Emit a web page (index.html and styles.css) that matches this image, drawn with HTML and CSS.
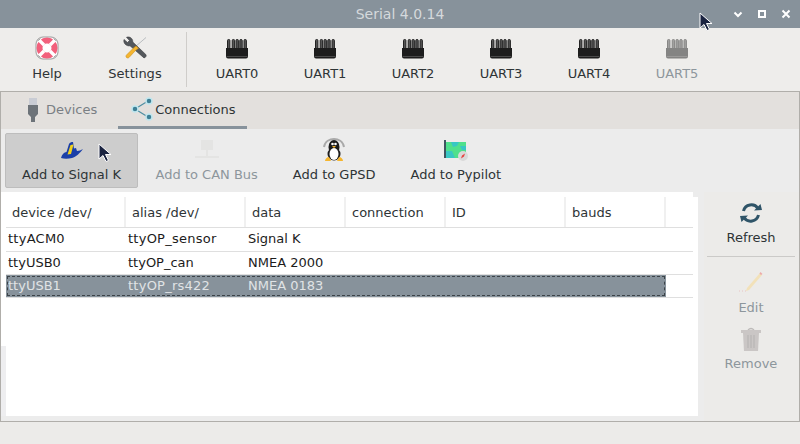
FILE: index.html
```html
<!DOCTYPE html>
<html lang="en">
<head>
<meta charset="utf-8">
<title>Serial 4.0.14</title>
<link rel="stylesheet" href="styles.css">
</head>
<body>
<svg class="defs" width="0" height="0" aria-hidden="true">
  <symbol id="uart" viewBox="0 0 24 24">
    <g fill="#555" stroke="#222" stroke-width="1">
      <rect x="2.5" y="3.5" width="2.4" height="11" rx="1"/>
      <rect x="7.2" y="3.5" width="2.4" height="11" rx="1"/>
      <rect x="11" y="3.5" width="2.4" height="11" rx="1"/>
      <rect x="14.8" y="3.5" width="2.4" height="11" rx="1"/>
      <rect x="19" y="3.5" width="2.4" height="11" rx="1"/>
    </g>
    <path d="M1 12h22v8.500q0 2-2 2H3q-2 0-2-2z" fill="#1d1d1d"/>
    <path d="M1.500 20.500h21" stroke="#4a4a4a"/>
  </symbol>
</svg>

<header class="titlebar">
  <span class="title">Serial 4.0.14</span>
  <div class="winbtns">
    <svg width="10" height="10" viewBox="0 0 10 10"><path d="M1.500 3.500L5 7l3.500-3.500" fill="none" stroke="#fff" stroke-width="2"/></svg>
    <svg width="10" height="10" viewBox="0 0 10 10"><rect x="2" y="2" width="6" height="6" fill="none" stroke="#fff" stroke-width="2"/></svg>
    <svg width="10" height="10" viewBox="0 0 10 10"><path d="M1.500 1.500l7 7M8.500 1.500l-7 7" fill="none" stroke="#fff" stroke-width="2"/></svg>
  </div>
</header>

<nav class="toolbar">
  <div class="tool">
    <svg class="ico" viewBox="0 0 24 24">
      <rect x="1" y="1" width="22" height="22" rx="7" fill="#fff" stroke="#9a9a9a"/>
      <circle cx="12" cy="12" r="7.500" fill="none" stroke="#f2607c" stroke-width="6"/>
      <path d="M4 4l5 5M20 4l-5 5M4 20l5-5M20 20l-5-5" stroke="#fff" stroke-width="3.200"/>
      <path d="M2.500 5l3-2.500M18.500 2.500l3 2.500M2.500 19l3 2.500M18.500 21.500l3-2.500" stroke="#9a9a9a" stroke-width="1"/>
    </svg>
    <span>Help</span>
  </div>
  <div class="tool">
    <svg class="ico" viewBox="0 0 24 24">
      <path d="M23 1.500L12 11" stroke="#b9bdc0" stroke-width="1"/>
      <path d="M1 3.500l3.500 3 2-2-3-3.200c3-1.200 6.500 1 6.300 4.700l13 12.500c1 1.300 0 3-1.800 3.400L7 9.800C3.300 10.500 0 7 1 3.500z" fill="#54585c" stroke="#3a3d40" stroke-width=".6"/>
      <path d="M13 10l-3 2.500-6.500 6.500c-1.500 1.700.5 4 2.500 2.500l6.500-7 3-2.300z" fill="#f5b52e" stroke="#c98f1c" stroke-width=".6"/>
    </svg>
    <span>Settings</span>
  </div>
  <div class="vsep"></div>
  <div class="tool"><svg class="ico"><use href="#uart"/></svg><span>UART0</span></div>
  <div class="tool"><svg class="ico"><use href="#uart"/></svg><span>UART1</span></div>
  <div class="tool"><svg class="ico"><use href="#uart"/></svg><span>UART2</span></div>
  <div class="tool"><svg class="ico"><use href="#uart"/></svg><span>UART3</span></div>
  <div class="tool"><svg class="ico"><use href="#uart"/></svg><span>UART4</span></div>
  <div class="tool off"><svg class="ico"><use href="#uart"/></svg><span>UART5</span></div>
</nav>

<main class="frame">
  <div class="tabs">
    <div class="tab">
      <svg class="tabico" viewBox="0 0 24 24">
        <path d="M8 0h8v7H8z" fill="#c9ccd4"/>
        <path d="M7 7h10v9l-3 3v5h-4v-5l-3-3z" fill="#6d7379"/>
      </svg>
      <span>Devices</span>
    </div>
    <div class="tab active">
      <svg class="tabico" viewBox="0 0 24 24">
        <path d="M18 4L5 12l13 8" fill="none" stroke="#4f8fa3" stroke-width="1.200"/>
        <g fill="#3f8096" stroke="#bfe6ee" stroke-width="1.500">
          <circle cx="19" cy="4" r="3"/><circle cx="5" cy="12" r="3"/><circle cx="19" cy="20" r="3"/>
        </g>
      </svg>
      <span>Connections</span>
    </div>
  </div>

  <div class="actions">
    <div class="action hover">
      <svg class="ico" viewBox="0 0 24 24">
        <path d="M1 20c3 1 7 1 11 0s8-5 11-9c-2 1-4 2-6 2l-1-3-2 .5-1-6.500c-2 0-3 .5-4 2l-2.500 8C4 14.500 2 16 1 20z" fill="#1a3fa8"/>
        <path d="M10.500 7l3-.5-2.500 9.500-3.500.5z" fill="#f2d21c"/>
      </svg>
      <span>Add to Signal K</span>
    </div>
    <div class="action off">
      <svg class="ico" viewBox="0 0 24 24">
        <path d="M6 2h12v10H6zM11 12h2v6h-2zM0 18h24v2H0z" fill="#dededc"/>
      </svg>
      <span>Add to CAN Bus</span>
    </div>
    <div class="action">
      <svg class="ico" viewBox="0 0 24 24">
        <path d="M2 9C3 3 8 1 12 1s9 2 10 8" fill="none" stroke="#a9a9a9" stroke-width="2"/>
        <ellipse cx="12" cy="9" rx="5.500" ry="7" fill="#1b1b1b"/>
        <ellipse cx="12" cy="16" rx="6.500" ry="6.500" fill="#1b1b1b"/>
        <ellipse cx="12" cy="16" rx="4.500" ry="6" fill="#fff"/>
        <circle cx="10.500" cy="6" r="1.300" fill="#fff"/><circle cx="13.500" cy="6" r="1.300" fill="#fff"/>
        <path d="M10 8h4l-2 2z" fill="#f5b52e"/>
        <path d="M3 23c0-2 2-4 4-4l2 4zM21 23c0-2-2-4-4-4l-2 4z" fill="#f5b52e"/>
      </svg>
      <span>Add to GPSD</span>
    </div>
    <div class="action">
      <svg class="ico" viewBox="0 0 24 24">
        <path d="M0 2h2v18H0z" fill="#3e5560"/>
        <path d="M2 4h20v16H2z" fill="#4fe08c"/>
        <path d="M7 4h8l-2 4-4 1zM16 8h6v4h-4zM2 13h6l3 7H2z" fill="#38c7c4"/>
        <circle cx="19" cy="18" r="5" fill="#d9d9d9"/>
        <path d="M21 15.500l-3 2-1 3 3-2z" fill="#e8433f"/>
      </svg>
      <span>Add to Pypilot</span>
    </div>
  </div>

  <div class="content">
    <section class="tablewrap">
      <div class="tabletop"></div>
      <div class="tablebody">
        <div class="gutter"></div>
        <div class="grid">
          <div class="row head">
            <div class="cell c120">device /dev/</div>
            <div class="cell c120">alias /dev/</div>
            <div class="cell c100">data</div>
            <div class="cell c100">connection</div>
            <div class="cell c120">ID</div>
            <div class="cell c100">bauds</div>
          </div>
          <div class="row">
            <div class="cell c120 wide">ttyACM0</div>
            <div class="cell c120 wide">ttyOP_sensor</div>
            <div class="cell c100">Signal K</div>
          </div>
          <div class="row">
            <div class="cell c120">ttyUSB0</div>
            <div class="cell c120">ttyOP_can</div>
            <div class="cell c100">NMEA 2000</div>
          </div>
          <div class="row selected">
            <div class="selbox">
              <div class="cell c120">ttyUSB1</div>
              <div class="cell c120 wide">ttyOP_rs422</div>
              <div class="cell c100">NMEA 0183</div>
            </div>
          </div>
        </div>
      </div>
    </section>
    <aside class="side">
      <div class="sidebtn first">
        <svg class="ico" viewBox="0 0 24 24">
          <path d="M4.500 10A8 8 0 0 1 19 7.500M19.500 14A8 8 0 0 1 5 16.500" fill="none" stroke="#2f5468" stroke-width="3"/>
          <path d="M23 9l-8 .5L21.500 3zM1 15l8-.5L2.500 21z" fill="#2f5468"/>
        </svg>
        <span>Refresh</span>
      </div>
      <div class="hsep"></div>
      <div class="sidebtn off">
        <svg class="ico" viewBox="0 0 24 24">
          <path d="M8 18l13-15 2 2-13 15-3 1z" fill="#f9d98a"/>
          <path d="M20.500 3.500l1-1.500 2 2-1.500 1z" fill="#ee6a6a"/>
          <path d="M0 21h8" stroke="#e8a0a0" stroke-width="1" stroke-dasharray="1 2"/>
        </svg>
        <span>Edit</span>
      </div>
      <div class="sidebtn off tight">
        <svg class="ico" viewBox="0 0 24 24">
          <path d="M9 3q3-3 6 0" fill="none" stroke="#8f8a8a" stroke-width="1.200"/>
          <path d="M2 3h20v3H2z" fill="#a9a3a3"/>
          <path d="M4 6h16l-1 18H5z" fill="#a9a3a3"/>
          <path d="M9 8v13M12 8v13M15 8v13" stroke="#7f7a7a" stroke-width="1"/>
        </svg>
        <span>Remove</span>
      </div>
    </aside>
  </div>
</main>

<svg class="cursor top" width="14" height="20" viewBox="0 0 14 20"><path d="M1 1v15l4-3.500 3 6 2.500-1-3-6h5.500z" fill="#1a2340" stroke="#fff" stroke-width="1"/></svg>
<svg class="cursor inner" width="14" height="20" viewBox="0 0 14 20"><path d="M1 1v15l4-3.500 3 6 2.500-1-3-6h5.500z" fill="#1a2340" stroke="#fff" stroke-width="1"/></svg>
</body>
</html>
```
FILE: styles.css
```css
* { box-sizing: border-box; }
html, body { margin: 0; height: 100%; }
body {
  width: 800px;
  height: 444px;
  overflow: hidden;
  background: #ecebe9;
  font-family: "DejaVu Sans", sans-serif;
  font-size: 13px;
  color: #2e3436;
  position: relative;
  display: flex;
  flex-direction: column;
}
.defs { position: absolute; }

.titlebar {
  height: 28px;
  flex: none;
  background: #87929b;
  display: flex;
  align-items: center;
  justify-content: center;
  position: relative;
}
.title { color: #d5d9dc; font-size: 14px; }
.winbtns {
  position: absolute;
  right: 9px;
  top: 9px;
  display: flex;
  gap: 14px;
}
.winbtns svg { display: block; }

.toolbar {
  height: 63px;
  flex: none;
  padding: 4px 0 0 3px;
  display: flex;
  background: #eeedeb;
}
.tool {
  width: 88px;
  height: 55px;
  display: flex;
  flex-direction: column;
  align-items: center;
  padding-top: 4px;
  gap: 6px;
}
.ico { width: 24px; height: 24px; display: block; flex: none; }
.off { color: #8d969c; }
.off .ico { opacity: .5; }
.vsep { width: 1px; height: 55px; background: #cfcdca; margin: 0 6px 0 7px; }

.frame {
  width: 800px;
  height: 331px;
  flex: none;
  border: 1px solid #b0aeaa;
  display: flex;
  flex-direction: column;
}
.tabs {
  height: 37px;
  flex: none;
  background: #e3e0dd;
  display: flex;
  padding-left: 20px;
}
.tab {
  height: 35px;
  display: flex;
  align-items: center;
  gap: 1px;
  color: #7a7f84;
  padding: 0 21px 0 0;
}
.tab.active {
  color: #2e3436;
  width: 129px;
  padding: 0 0 0 12px;
  border-bottom: 3px solid #87929b;
  height: 37px;
}
.tabico { width: 24px; height: 24px; flex: none; }

.actions {
  height: 63px;
  flex: none;
  background: #ececec;
  display: flex;
  padding: 4px 0 3px 4px;
}
.action {
  padding: 4px 16.5px 0;
  height: 55px;
  border: 1px solid transparent;
  border-radius: 2px;
  display: flex;
  flex-direction: column;
  align-items: center;
  gap: 5px;
}
.action.hover { background: #cdcdcd; border-color: #bdbdbd; padding: 4px 16px 0; }

.content {
  flex: 1;
  display: flex;
  min-height: 0;
}
.tablewrap {
  width: 703px;
  background: #ececec;
  display: flex;
  flex-direction: column;
  padding-bottom: 5px;
}
.tabletop { height: 5px; width: 692px; background: #fff; flex: none; }
.tablebody { flex: 1; width: 697px; display: flex; background: #fff; }
.gutter {
  width: 5px;
  flex: none;
  background: linear-gradient(#fff 149px, #eeeef0 149px);
}
.grid { flex: 1; }
.row {
  display: flex;
  height: 23px;
  padding-bottom: 2px;
  border-bottom: 1px solid #dfdfdf;
  width: 687px;
  align-items: center;
  color: #1c1c1c;
}
.head {
  height: 31px;
  padding-bottom: 0;
  color: #2e3436;
  align-items: stretch;
}
.row:nth-child(2) { height: 24px; }
.cell { padding-left: 2px; white-space: nowrap; }
.wide { letter-spacing: .25px; }
.head .cell {
  padding-left: 6px;
  border-right: 2px solid #f0f0f0;
  display: flex;
  align-items: center;
}
.c120 { width: 120px; flex: none; }
.c100 { width: 100px; flex: none; }
.row.selected { align-items: stretch; padding-bottom: 0; }
.selbox {
  width: 660px;
  padding-bottom: 2px;
  background: #87929b;
  color: #e0e3e5;
  display: flex;
  align-items: center;
  outline: 1px dashed #3c4348;
  outline-offset: -2px;
}

.side {
  flex: 1;
  background: #ecebe9;
  display: flex;
  flex-direction: column;
  align-items: center;
  padding: 9px 1px 0 0;
}
.sidebtn {
  display: flex;
  flex-direction: column;
  align-items: center;
  gap: 6px;
  height: 57px;
}
.sidebtn.first { height: 47px; gap: 5px; }
.sidebtn.tight { gap: 5px; }
.hsep { width: 88px; height: 1px; background: #cbcac8; flex: none; margin: 8px 0 13px; }

.cursor { position: absolute; display: block; }
.cursor.top { left: 699px; top: 12px; }
.cursor.inner { left: 98px; top: 143px; }
```
